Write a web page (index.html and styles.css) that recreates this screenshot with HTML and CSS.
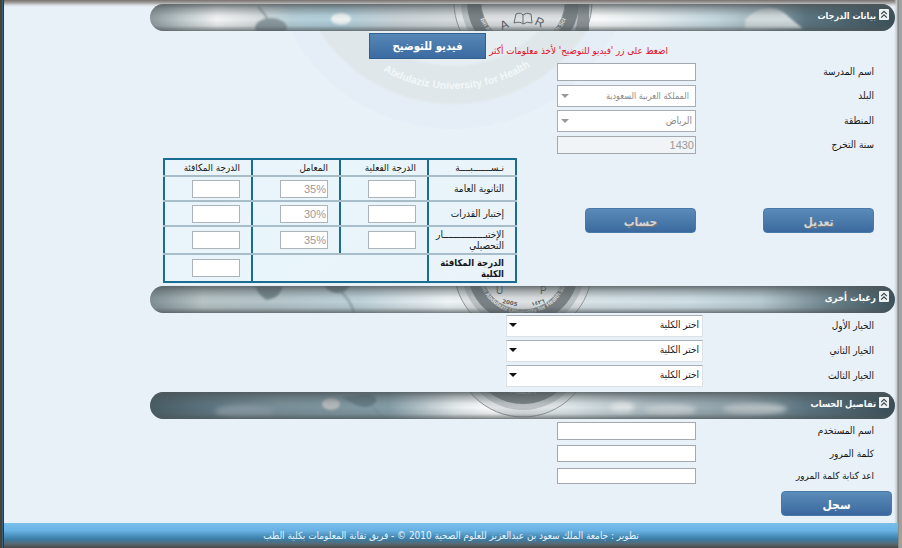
FILE: index.html
```html
<!DOCTYPE html>
<html lang="ar" dir="rtl">
<head>
<meta charset="utf-8">
<title>بيانات الدرجات</title>
<link rel="stylesheet" href="styles.css">
</head>
<body>
<svg class="defs" width="0" height="0" aria-hidden="true">
  <defs>
    <filter id="haze" x="-30%" y="-30%" width="160%" height="160%"><feGaussianBlur stdDeviation="1"/></filter>
    <filter id="cloud" x="-50%" y="-50%" width="200%" height="200%"><feGaussianBlur stdDeviation="2.5"/></filter>
    <linearGradient id="shade" x1="0" y1="0" x2="0" y2="1">
      <stop offset="0" stop-color="#4c5558" stop-opacity=".8"/>
      <stop offset=".18" stop-color="#4c5558" stop-opacity=".42"/>
      <stop offset=".42" stop-color="#4c5558" stop-opacity=".07"/>
      <stop offset=".58" stop-color="#4c5558" stop-opacity="0"/>
      <stop offset=".8" stop-color="#4c5558" stop-opacity=".15"/>
      <stop offset="1" stop-color="#4c5558" stop-opacity=".75"/>
    </linearGradient>
    <linearGradient id="tone1">
      <stop offset="0" stop-color="#8c989c"/><stop offset=".04" stop-color="#bcc7ca"/>
      <stop offset=".09" stop-color="#f2f4f4"/><stop offset=".14" stop-color="#dce1e2"/>
      <stop offset=".19" stop-color="#b7d0d9"/><stop offset=".25" stop-color="#b0cfdb"/>
      <stop offset=".33" stop-color="#c8d2d7"/><stop offset=".42" stop-color="#d8dcde"/>
      <stop offset=".6" stop-color="#fafbfb"/><stop offset=".68" stop-color="#e3ecef"/>
      <stop offset=".76" stop-color="#c3d6de"/><stop offset=".82" stop-color="#a2b5bd"/>
      <stop offset=".88" stop-color="#5a7580"/><stop offset="1" stop-color="#3b4f58"/>
    </linearGradient>
    <linearGradient id="tone2">
      <stop offset="0" stop-color="#7f9095"/><stop offset=".07" stop-color="#b8c4c6"/>
      <stop offset=".15" stop-color="#b4c4c9"/><stop offset=".28" stop-color="#bdd1d9"/>
      <stop offset=".4" stop-color="#f0f5f7"/><stop offset=".58" stop-color="#d9e4e8"/>
      <stop offset=".72" stop-color="#cfdfe5"/><stop offset=".82" stop-color="#b9cbd2"/>
      <stop offset=".91" stop-color="#6e848d"/><stop offset="1" stop-color="#3b525b"/>
    </linearGradient>
    <linearGradient id="tone3">
      <stop offset="0" stop-color="#485b63"/><stop offset=".08" stop-color="#5c747f"/>
      <stop offset=".17" stop-color="#788e97"/><stop offset=".32" stop-color="#829ba5"/>
      <stop offset=".41" stop-color="#e4eaec"/><stop offset=".46" stop-color="#fff"/>
      <stop offset=".57" stop-color="#dbe4e7"/><stop offset=".68" stop-color="#a6b6bd"/>
      <stop offset=".8" stop-color="#8b9da5"/><stop offset=".88" stop-color="#5b7480"/>
      <stop offset="1" stop-color="#394d57"/>
    </linearGradient>
    <path id="ringText" d="M-46 0A46 46 0 0 0 46 0"/>
    <g id="emblem">
      <circle r="69" fill="#dfe3e5" stroke="#8e9699" stroke-width="1"/>
      <circle r="62" fill="#bcc2c5"/>
      <circle r="56" fill="#7b8285"/>
      <circle r="42" fill="#dfe2e4" stroke="#969c9f" stroke-width="1"/>
      <text class="ring-text" direction="ltr"><textPath href="#ringText" startOffset="50%" text-anchor="middle">bin Abdulaziz University for Health Sci</textPath></text>
    </g>
  </defs>
</svg>

<div class="page">
  <main class="content">
    <svg class="watermark" viewBox="0 0 370 110" width="370" height="110" direction="ltr" aria-hidden="true">
      <path id="wmText" d="M41 -86A144 144 0 0 0 329 -86" fill="none"/>
      <circle cx="185" cy="-86" r="184" fill="#e3ecf5" opacity=".6"/>
      <g filter="url(#haze)">
        <circle cx="185" cy="-86" r="140" fill="none" stroke="#dfe7ea" stroke-width="38"/>
        <circle cx="185" cy="-86" r="121" fill="#e7eef2"/>
      </g>
      <text class="wm-text" direction="ltr"><textPath href="#wmText" startOffset="153">Abdulaziz University for Health</textPath></text>
    </svg>

    <header class="bar">
      <svg class="scene" viewBox="0 0 745 27" direction="ltr" aria-hidden="true">
        <rect width="745" height="27" fill="url(#tone1)"/>
        <g filter="url(#haze)">
          <path d="M108 3Q114 8 118 16" stroke="#93a2a7" stroke-width="2" fill="none"/>
          <ellipse cx="121" cy="24" rx="16" ry="10" fill="#8a999e"/>
          <ellipse cx="191" cy="15" rx="10" ry="6" fill="#edf3f2"/>
          <path d="M595 16q10-12 24-12q12 0 20 9l14 12h-58z" fill="#d1dadd"/>
        </g>
        <use href="#emblem" x="373" y="-2"/>
        <path d="M428 0h11v27h-14q4-12 3-27z" fill="#8b9194"/>
        <path d="M366 10q5-2 7 1q3-3 8-1l1 9q-5-2-9 1q-3-3-9-1zM373 11v9" fill="none" stroke="#656d70"/>
        <text class="glyph" x="352" y="26" transform="rotate(-22 352 26)">A</text><text class="glyph" x="384" y="20" transform="rotate(25 384 20)">R</text>
        <rect width="745" height="27" fill="url(#shade)"/>
      </svg>
      <svg class="toggle" viewBox="0 0 11 12"><rect width="11" height="12" rx="1" fill="#eef2f3"/><path d="M2.4 5.5 5.5 2.4 8.6 5.5M2.4 9.5 5.5 6.4 8.6 9.5" fill="none" stroke="#33434b" stroke-width="1.3"/></svg>
      <h2 class="bar-title first">بيانات الدرجات</h2>
    </header>

    <section class="grades">
      <div class="hint-row">
        <span class="hint">اضغط على زر 'فيديو للتوضيح' لأخذ معلومات أكثر</span>
        <button class="video-btn">فيديو للتوضيح</button>
      </div>
      <div class="row"><label>اسم المدرسة</label><input class="field" type="text"></div>
      <div class="row"><label>البلد</label><div class="pick disabled"><span class="country">المملكة العربية السعودية</span><i class="caret"></i></div></div>
      <div class="row"><label>المنطقة</label><div class="pick disabled"><span>الرياض</span><i class="caret"></i></div></div>
      <div class="row"><label>سنة التخرج</label><input class="field" type="text" value="1430" disabled></div>

      <div class="lower">
        <button class="btn muted">تعديل</button>
        <button class="btn muted">حساب</button>
        <table class="scores">
          <tr class="head"><th>نـســـــــبــــة</th><th>الدرجة الفعلية</th><th>المعامل</th><th>الدرجة المكافئة</th></tr>
          <tr class="r1"><th>الثانوية العامة</th><td><input></td><td><input value="35%" disabled></td><td><input></td></tr>
          <tr class="r2"><th>إختبار القدرات</th><td><input></td><td><input value="30%" disabled></td><td><input></td></tr>
          <tr class="r3"><th>الإختبــــــــــــــــار<br>التحصيلي</th><td><input></td><td><input value="35%" disabled></td><td><input></td></tr>
          <tr class="r4"><th class="total">الدرجة المكافئة<br>الكلية</th><td colspan="2"></td><td><input></td></tr>
        </table>
      </div>
    </section>

    <header class="bar">
      <svg class="scene" viewBox="0 0 745 27" direction="ltr" aria-hidden="true">
        <rect width="745" height="27" fill="url(#tone2)"/>
        <g filter="url(#haze)">
          <path d="M105 0h28q-3 12-16 14q-8-4-12-14zM173-2h28q-6 10-14 9q-10-1-14-9z" fill="#75878d"/>
          <path d="M190 5Q199 12 204 26" stroke="#8b9ca2" stroke-width="2" fill="none"/>
        </g>
        <use href="#emblem" x="373" y="-18"/>
        <text class="tiny" x="352" y="17" transform="rotate(12 352 17)">2005</text><text class="tiny" x="382" y="20" transform="rotate(-16 382 20)">١٤٢٦</text>
        <text class="glyph small" x="346" y="8">U</text><text class="glyph small" x="390" y="8">P</text>
        <rect width="745" height="27" fill="url(#shade)"/>
      </svg>
      <svg class="toggle" viewBox="0 0 11 12"><rect width="11" height="12" rx="1" fill="#eef2f3"/><path d="M2.4 5.5 5.5 2.4 8.6 5.5M2.4 9.5 5.5 6.4 8.6 9.5" fill="none" stroke="#33434b" stroke-width="1.3"/></svg>
      <h2 class="bar-title">رغبات أخرى</h2>
    </header>

    <section class="choices">
      <div class="row"><label>الخيار الأول</label><div class="pick wide"><span>اختر الكلية</span><i class="caret"></i></div></div>
      <div class="row"><label>الخيار الثاني</label><div class="pick wide"><span>اختر الكلية</span><i class="caret"></i></div></div>
      <div class="row"><label>الخيار الثالث</label><div class="pick wide"><span>اختر الكلية</span><i class="caret"></i></div></div>
    </section>

    <header class="bar">
      <svg class="scene" viewBox="0 0 745 27" direction="ltr" aria-hidden="true">
        <rect width="745" height="27" fill="url(#tone3)"/>
        <g filter="url(#cloud)">
          <ellipse cx="95" cy="20" rx="30" ry="7" fill="#8496a0"/>
          <ellipse cx="472" cy="15" rx="12" ry="6" fill="#dde3e5"/>
          <ellipse cx="520" cy="18" rx="26" ry="6" fill="#c2ccd0"/>
          <ellipse cx="605" cy="17" rx="32" ry="6" fill="#b3bec2"/>
        </g>
        <g filter="url(#haze)">
          <ellipse cx="181" cy="12" rx="9" ry="6" fill="#b3b8ba"/>
          <path d="M191 5l25-3q12 0 10 8q-9 9-22 2z" fill="#657c86"/>
          <path d="M218 10l14 15" stroke="#6b818a"/>
        </g>
        <use href="#emblem" x="373" y="-44"/>
        <rect width="745" height="27" fill="url(#shade)"/>
      </svg>
      <svg class="toggle" viewBox="0 0 11 12"><rect width="11" height="12" rx="1" fill="#eef2f3"/><path d="M2.4 5.5 5.5 2.4 8.6 5.5M2.4 9.5 5.5 6.4 8.6 9.5" fill="none" stroke="#33434b" stroke-width="1.3"/></svg>
      <h2 class="bar-title third">تفاصيل الحساب</h2>
    </header>

    <section class="account">
      <div class="row"><label>اسم المستخدم</label><input class="field" type="text"></div>
      <div class="row"><label>كلمة المرور</label><input class="field mid" type="password"></div>
      <div class="row"><label class="long">اعد كتابة كلمة المرور</label><input class="field short" type="password"></div>
      <button class="btn submit">سجل</button>
    </section>
  </main>
  <footer class="footer"><span>تطوير : جامعة الملك سعود بن عبدالعزيز للعلوم الصحية 2010 © - فريق تقانة المعلومات بكلية الطب</span></footer>
</div>
</body>
</html>
```
FILE: styles.css
```css
* { box-sizing: border-box; }
body {
  margin: 0;
  width: 902px;
  height: 548px;
  overflow: hidden;
  font: 10px/12px "DejaVu Sans Condensed", "DejaVu Sans", sans-serif;
  color: #161616;
}
.defs { position: absolute; }
.page {
  display: flex;
  flex-direction: column;
  width: 902px;
  height: 548px;
  background:
    linear-gradient(to right, #45413d 0 2px, #3d6077 2px 3px, #233947 3px 4px, transparent 4px),
    linear-gradient(to left, #9da19f 0 3px, #70797a 4px, #c6cbcb 5px, transparent 8px),
    linear-gradient(#77716e, #a7a5a4 3px, #d6dadd 5px, transparent 7px),
    #e8f0f8;
}
.content {
  position: relative;
  height: 523px;
  padding-top: 4px;
  display: flex;
  flex-direction: column;
}
.watermark { position: absolute; left: 268px; top: 31px; }
.wm-text { font: bold 10.5px "Liberation Sans", sans-serif; fill: #f3f7f9; }
.ring-text { font: bold 6px "Liberation Sans", sans-serif; fill: #e2e5e6; }
.glyph { font: 12px "Liberation Sans", sans-serif; fill: #555e62; }
.glyph.small { font-size: 10px; }
.tiny { font: bold 5.5px "DejaVu Sans", sans-serif; fill: #555e62; }

.bar {
  position: relative;
  flex: none;
  width: 745px;
  height: 27px;
  margin-right: 7px;
  padding: 5px 6px 0 0;
  display: flex;
  gap: 3px;
  border-radius: 14px;
  overflow: hidden;
}
.scene { position: absolute; inset: 0; width: 745px; height: 27px; }
.toggle { position: relative; flex: none; width: 10px; height: 11px; }
.bar-title { position: relative; margin: 1px 0 0; font-size: 9.5px; line-height: 12px; color: #fff; }
.bar-title.first { font-size: 9px; }
.bar-title.third { font-size: 9.2px; }

.row { display: flex; align-items: center; }
.row label { width: 178px; flex: none; white-space: nowrap; }
.row .long { font-size: 9.8px; }
.field {
  width: 139px;
  height: 18px;
  padding: 0 1px;
  border: 1px solid #a3a9ae;
  background: #fff;
  font: 11px "Liberation Sans", sans-serif;
}
input:disabled { color: #9a9a9a; background: #fff; }
.field:disabled { background: #f0f4f6; }
.field.mid { height: 17px; }
.field.short { height: 16px; }
.pick {
  width: 139px;
  height: 22px;
  padding: 0 3px 0 5px;
  display: flex;
  align-items: center;
  justify-content: space-between;
  border: 1px solid #a8aeb4;
  background: #fff;
  white-space: nowrap;
}
.pick.disabled { color: #8a8a8a; }
.country { padding-right: 3px; font-size: 9px; }
.caret { flex: none; border: 4px solid transparent; border-top: 4px solid #111; border-bottom: 0; }
.disabled .caret { border-top-color: #999; margin-left: -2px; }
.pick.wide {
  width: 197px;
  padding: 0 3px 2px 2px;
  border-color: #aab0b6 #dce1e5 #dce1e5;
}

.grades { position: relative; height: 255px; padding-right: 28px; }
.grades .row { height: 24.5px; position: relative; top: -.5px; }
.hint-row { display: flex; height: 29px; padding: 2px 206px 0 0; gap: 3px; }
.hint { width: 179px; padding-top: 12px; color: #e01228; white-space: nowrap; font-size: 9.75px; }
.video-btn {
  width: 117px;
  height: 26px;
  padding: 0;
  border: 1px solid #2f608f;
  background: linear-gradient(#5687b6, #3b6ba1);
  color: #fff;
  font: bold 11.3px "DejaVu Sans Condensed", sans-serif;
}
.lower { display: flex; align-items: flex-start; }
.btn {
  width: 111px;
  height: 25px;
  padding: 3px 0 0;
  border: 1px solid #4a79a8;
  border-radius: 4px;
  background: linear-gradient(#5b8bb8, #3b699f);
  color: #fff;
  font: bold 12px "DejaVu Sans Condensed", sans-serif;
}
.lower .btn { margin-top: 50px; margin-left: 67px; }
.lower .btn + .btn { margin-left: 68px; }
.muted { color: #d5d5d5; text-shadow: 1px 1px 0 #777; }

.scores {
  width: 354px;
  height: 125px;
  border-collapse: collapse;
  table-layout: fixed;
  border: 2px solid #1b6c91;
  background: linear-gradient(135deg, #eaf4fb, #e8f5fa 40%, #eaf3f9);
}
.scores th, .scores td {
  padding: 0 11px;
  border: 2px solid #1b6c91;
  border-top: 2px solid #a7bdca;
  border-bottom: 2px solid #a7bdca;
  font-weight: normal;
  text-align: right;
  line-height: 11px;
  white-space: nowrap;
}
.scores .head th { height: 17px; border-top-color: #1b6c91; font-size: 9.8px; }
.scores .r1 { height: 25px; }
.scores .r2 { height: 25px; }
.scores .r3 { height: 28px; }
.scores .r4 { height: 28px; }
.scores .r4 > * { border-bottom-color: #1b6c91; }
.scores .total { font-weight: bold; font-size: 9.4px; }
.scores input {
  display: block;
  width: 48px;
  height: 18px;
  padding: 0 1px;
  border: 1px solid #adb4b9;
  background: #fff;
  font: 11px "Liberation Sans", sans-serif;
  text-align: right;
  direction: ltr;
}

.choices { height: 79px; padding: 0 28px 0 0; }
.choices .row { height: 25px; }
.choices .row label { width: 171px; }

.account { padding: 1px 28px 0 0; }
.account .row { height: 22.5px; }
.submit { display: block; margin: 3px -18px 0 0; }

.footer {
  height: 25px;
  margin-right: 4px;
  margin-left: 4px;
  padding-top: 7px;
  background: linear-gradient(#79bfeb, #68b2e4 30%, #3b7da6 64%, #566a75 83%, #4b4845);
  color: #e8f5fc;
  font-size: 9.95px;
  text-align: center;
  white-space: nowrap;
}
```
